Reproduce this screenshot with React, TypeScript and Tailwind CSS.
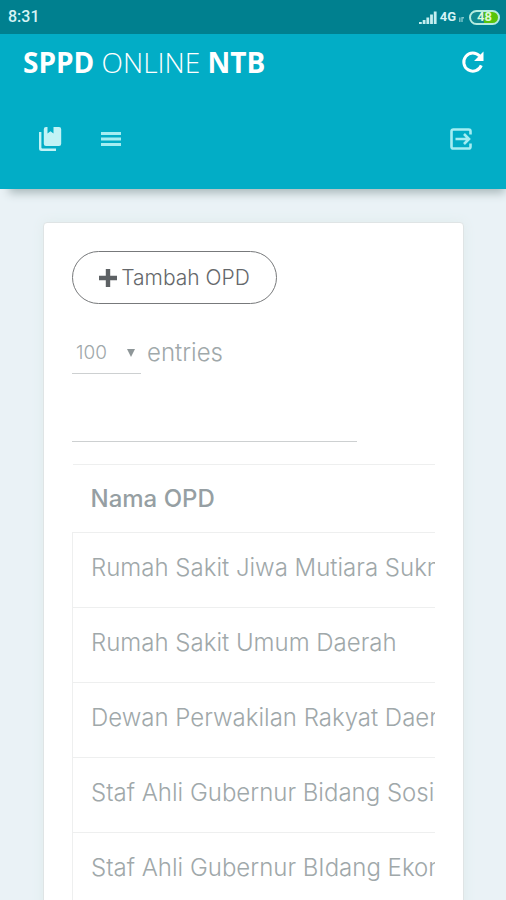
const rows = [
  "Rumah Sakit Jiwa Mutiara Sukma",
  "Rumah Sakit Umum Daerah",
  "Dewan Perwakilan Rakyat Daerah",
  "Staf Ahli Gubernur Bidang Sosial",
  "Staf Ahli Gubernur BIdang Ekonomi",
]

function StatusBar() {
  return (
    <div className="flex h-[34px] items-center justify-between bg-[#00808f] pr-1.5 pl-2 font-['Roboto',sans-serif] text-[#d5f3f5]">
      <span className="text-base font-medium">8:31</span>
      <div className="flex items-center gap-[3px]">
        <svg viewBox="0 0 18 13" className="h-[13px] w-[18px]" fill="#c4eef0" aria-hidden="true">
          <path d="M0 11h2.8v2H0zM3.7 9h2.8v4H3.7zM7.4 6.500h2.800v6.500H7.400zM11.100 3.500h2.800v9.500h-2.800zM14.800 0.500h2.800v12.500h-2.800z" />
        </svg>
        <span className="text-[13px] font-bold">4G</span>
        <svg viewBox="0 0 5 12" className="h-3 w-[5px]" fill="none" stroke="#7cc6cb" strokeWidth="1.4" aria-hidden="true">
          <path d="M.8 11V6.500M3 11V6.800h2" />
        </svg>
        <div className="ml-0.5 flex h-[15px] w-[31px] items-center justify-center rounded-full border-2 border-[#b5ecdf] bg-linear-to-r from-[#128b91] from-50% to-[#58c40b] to-50% text-[13px] font-bold text-[#dcf9d8]">
          48
        </div>
      </div>
    </div>
  )
}

function RefreshIcon() {
  return (
    <svg viewBox="0 0 24 24" className="size-[31px]" fill="none" stroke="currentColor" strokeWidth="2.3" aria-hidden="true">
      <path d="M17.500 7A7 7 0 1 0 18.800 14.200" />
      <path d="M20.500 3.500v7.300h-7.300z" fill="currentColor" stroke="none" />
    </svg>
  )
}

function CollectionIcon() {
  return (
    <svg viewBox="0 0 24 26" className="h-[26px] w-6" fill="#c2f3f6" aria-hidden="true">
      <path d="M1 6h2.400v15.500a1 1 0 0 0 1 1h13.600v2.400H3.500A2.500 2.500 0 0 1 1 22.400z" />
      <path d="M8 1h1.500v6.500l3-2.200 3 2.200V1H21a2.200 2.200 0 0 1 2.200 2.200v14.600A2.200 2.200 0 0 1 21 20H8a2.200 2.200 0 0 1-2.200-2.200V3.200A2.200 2.200 0 0 1 8 1z" />
    </svg>
  )
}

function MenuIcon() {
  return (
    <svg viewBox="0 0 22 18" className="h-[18px] w-[22px]" stroke="#a5edf2" strokeWidth="2.8" aria-hidden="true">
      <path d="M1 3.500h20M1 9h20M1 14.500h20" />
    </svg>
  )
}

function ExitIcon() {
  return (
    <svg viewBox="0 0 22 22" className="size-[22px]" fill="none" stroke="#a5edf2" strokeWidth="2.6" aria-hidden="true">
      <path d="M20.500 6.500V3.300a1.800 1.800 0 0 0-1.800-1.800H3.300a1.800 1.800 0 0 0-1.800 1.800v15.400a1.800 1.800 0 0 0 1.800 1.800h15.400a1.800 1.800 0 0 0 1.800-1.800V15.500" />
      <path d="M5.500 11h13M14 6l5 5-5 5" />
    </svg>
  )
}

function Header() {
  return (
    <header className="bg-[#02adc6] pb-[34px]">
      <div className="flex h-14 items-center justify-between pr-[18px] pl-[23px] text-white">
        <h1 className="font-['Open_Sans',sans-serif] text-[28px] font-light">
          <b className="font-bold">SPPD</b> ONLINE <b className="font-bold">NTB</b>
        </h1>
        <button type="button" aria-label="Muat ulang">
          <RefreshIcon />
        </button>
      </div>
      <nav className="mt-[33px] flex h-8 items-center justify-between pr-[34px] pl-[38px]">
        <div className="flex items-center gap-[38px]">
          <button type="button" aria-label="Koleksi">
            <CollectionIcon />
          </button>
          <button type="button" aria-label="Menu">
            <MenuIcon />
          </button>
        </div>
        <button type="button" aria-label="Keluar">
          <ExitIcon />
        </button>
      </nav>
    </header>
  )
}

export default function App() {
  return (
    <div className="flex h-screen flex-col overflow-hidden bg-[#eaf2f6] font-['Inter',sans-serif]">
      <StatusBar />
      <div className="z-10 shadow-[4px_9px_9px_-5px_#a9b8ba]">
        <Header />
      </div>
      <main className="min-h-0 flex-1 overflow-hidden pt-[33px] pr-[42px] pl-[43px]">
        <section className="rounded-t border border-[#dfe4e5] bg-white px-7 pt-7 pb-8 text-[#a0a8aa] shadow-[0_0_12px_#dfebec]">
          <button
            type="button"
            className="flex h-[53px] w-[205px] items-center justify-center gap-1 rounded-full border border-[#77797b] text-[21px] font-light text-[#65686b]"
          >
            <svg viewBox="0 0 18 18" className="size-[18px]" stroke="#5d6164" strokeWidth="4.4" aria-hidden="true">
              <path d="M9 0v18M0 9h18" />
            </svg>
            Tambah OPD
          </button>

          <label className="mt-7 flex items-center gap-1.5 text-2xl font-light">
            <span className="relative flex">
              <select className="h-[42px] w-[69px] appearance-none border-b border-[#cdd0d1] pl-1 text-[19px] font-light">
                <option>100</option>
              </select>
              <svg viewBox="0 0 8 8" className="pointer-events-none absolute top-[17px] right-1.5 size-2" fill="#8e9698" aria-hidden="true">
                <path d="M0 0h8L4 8z" />
              </svg>
            </span>
            entries
          </label>

          <input
            type="search"
            aria-label="Cari"
            className="mt-6 block h-11 w-[285px] max-w-full border-b border-[#cdd0d1] outline-none"
          />

          <div className="mt-[22px] overflow-hidden">
            <table className="w-full border-collapse text-left text-2xl whitespace-nowrap">
              <thead>
                <tr className="h-[68px] border-y border-[#eeefef]">
                  <th className="px-[18px] font-medium text-[#969fa3]">Nama OPD</th>
                </tr>
              </thead>
              <tbody>
                {rows.map((name) => (
                  <tr key={name} className="h-[75px] border-b border-l border-[#eeefef]">
                    <td className="px-[18px] pb-1 font-light">{name}</td>
                  </tr>
                ))}
              </tbody>
            </table>
          </div>
        </section>
      </main>
    </div>
  )
}
